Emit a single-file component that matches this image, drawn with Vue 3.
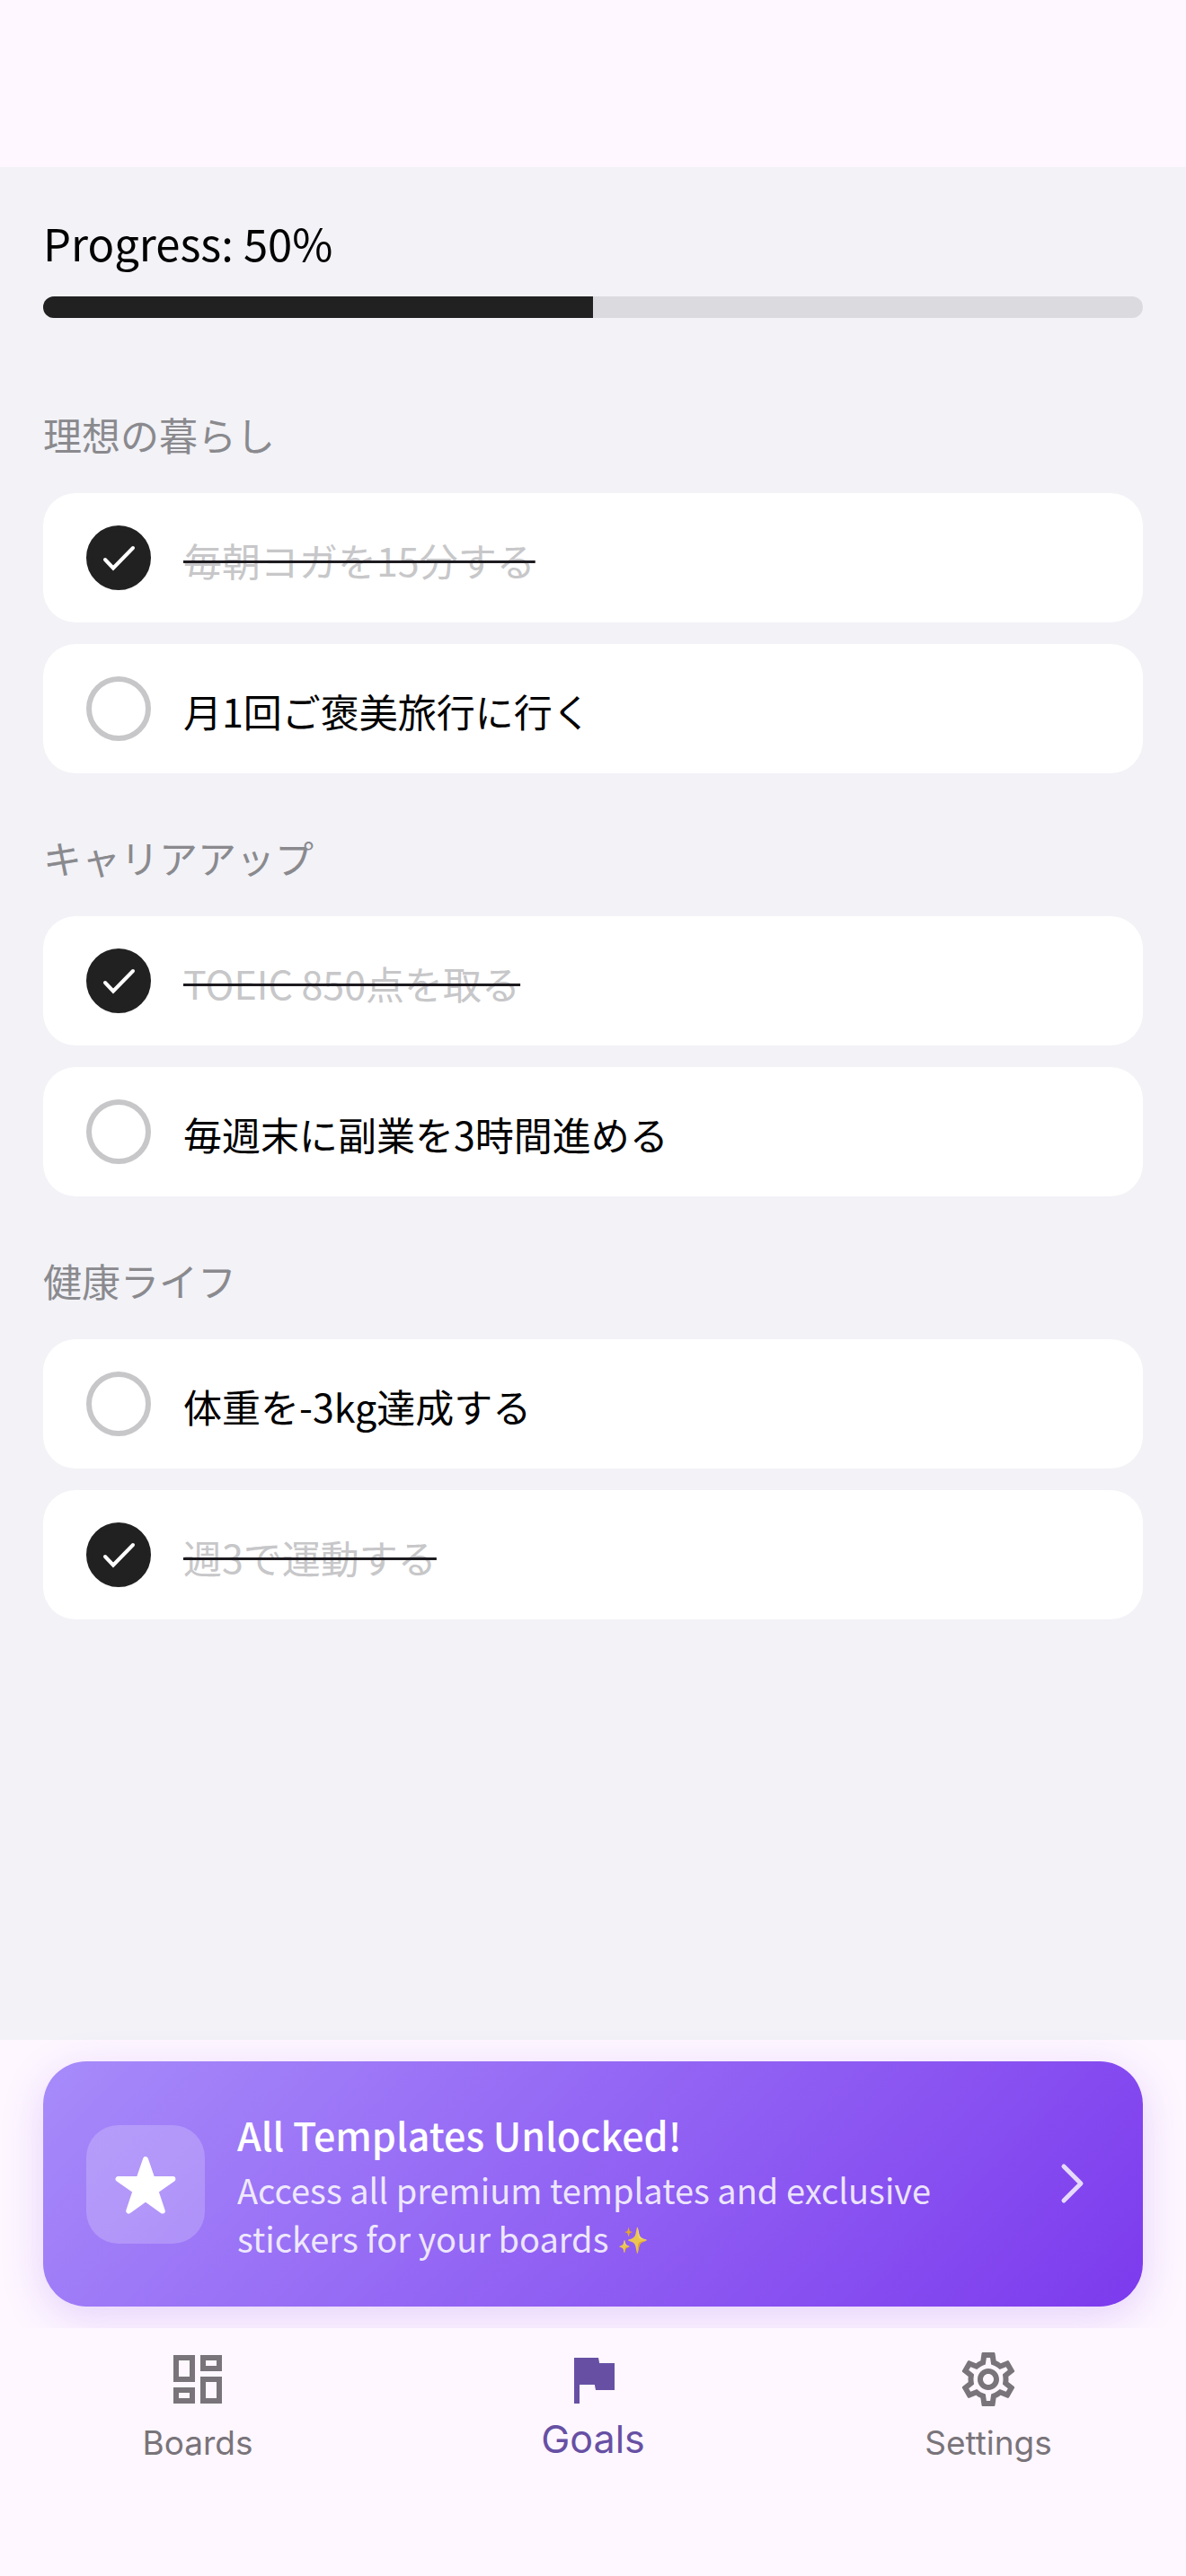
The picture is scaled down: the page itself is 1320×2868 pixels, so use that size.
<template>
  <div class="app-shell">
    <main class="goals-page">
      <!-- 全体の進捗 -->
      <section class="progress-section">
        <div id="progress-label" class="progress-label">Progress: {{ progress }}%</div>
        <div
            class="progress-track"
            role="progressbar"
            aria-labelledby="progress-label"
            :aria-valuenow="progress"
            aria-valuemin="0"
            aria-valuemax="100"
        >
          <div class="progress-fill" :style="{ width: progress + '%' }"></div>
        </div>
      </section>

      <!-- カテゴリごとの目標 -->
      <section v-for="group in groups" :key="group.title" class="goal-group">
        <h2 class="group-title">{{ group.title }}</h2>
        <ul class="goal-list">
          <li v-for="goal in group.goals" :key="goal.id">
            <label class="goal-card" :class="{ done: goal.done }">
              <span class="check">
                <input v-model="goal.done" type="checkbox" class="check-input" />
                <svg v-if="goal.done" class="check-mark" viewBox="0 0 72 72" aria-hidden="true">
                  <path d="M21 38l9 9.500 22-22.500" />
                </svg>
              </span>
              <span class="goal-text">{{ goal.text }}</span>
            </label>
          </li>
        </ul>
      </section>
    </main>

    <!-- プレミアムバナー -->
    <div class="banner-area">
      <button type="button" class="banner">
        <span class="banner-icon">
          <svg viewBox="0 0 72 72" aria-hidden="true">
            <path d="M36 8.200 L43.500 30 H66.400 L47.400 43.400 L54.800 65.600 L36 52 L17.200 65.600 L24.600 43.400 L5.600 30 H28.500 Z" />
          </svg>
        </span>
        <span class="banner-body">
          <span class="banner-title">All Templates Unlocked!</span>
          <span class="banner-text">Access all premium templates and exclusive</span>
          <span class="banner-text">
            <span>stickers for your boards</span>
            <span class="emoji">✨</span>
          </span>
        </span>
        <svg class="banner-arrow" viewBox="0 0 60 60" aria-hidden="true">
          <path d="M20 10l19 19-19 19" />
        </svg>
      </button>
    </div>

    <nav class="tab-bar">
      <a
          v-for="tab in tabs"
          :key="tab.name"
          href="#"
          class="tab-item"
          :class="{ active: activeTab === tab.name }"
          @click.prevent="activeTab = tab.name"
      >
        <svg class="tab-icon" viewBox="0 0 24 24" aria-hidden="true">
          <path :d="tab.icon" />
        </svg>
        <span class="tab-label">{{ tab.name }}</span>
      </a>
    </nav>
  </div>
</template>

<script setup>
import { computed, ref } from 'vue';

const groups = ref([
  {
    title: '理想の暮らし',
    goals: [
      { id: 1, text: '毎朝ヨガを15分する', done: true },
      { id: 2, text: '月1回ご褒美旅行に行く', done: false }
    ]
  },
  {
    title: 'キャリアアップ',
    goals: [
      { id: 3, text: 'TOEIC 850点を取る', done: true },
      { id: 4, text: '毎週末に副業を3時間進める', done: false }
    ]
  },
  {
    title: '健康ライフ',
    goals: [
      { id: 5, text: '体重を-3kg達成する', done: false },
      { id: 6, text: '週3で運動する', done: true }
    ]
  }
]);

const progress = computed(() => {
  const goals = groups.value.flatMap((group) => group.goals);
  return Math.round((goals.filter((goal) => goal.done).length / goals.length) * 100);
});

// タブ
const tabs = [
  {
    name: 'Boards',
    icon: 'M19 5v2h-4V5h4M9 5v6H5V5h4m10 8v6h-4v-6h4M9 17v2H5v-2h4M21 3h-8v6h8V3zM11 3H3v10h8V3zm10 8h-8v10h8V11zm-10 4H3v6h8v-6z'
  },
  {
    name: 'Goals',
    icon: 'M14.4 6L14 4H5v17h2v-7h5.6l.4 2h7V6z'
  },
  {
    name: 'Settings',
    icon: 'M19.43 12.98c.04-.32.07-.64.07-.98 0-.34-.03-.66-.07-.98l2.11-1.65c.19-.15.24-.42.12-.64l-2-3.46c-.09-.16-.26-.25-.44-.25-.06 0-.12.01-.17.03l-2.49 1c-.52-.4-1.08-.73-1.69-.98l-.38-2.65C14.46 2.18 14.25 2 14 2h-4c-.25 0-.46.18-.49.42l-.38 2.65c-.61.25-1.17.59-1.69.98l-2.49-1c-.06-.02-.12-.03-.18-.03-.17 0-.34.09-.43.25l-2 3.46c-.13.22-.07.49.12.64l2.11 1.65c-.04.32-.07.65-.07.98 0 .33.03.66.07.98l-2.11 1.65c-.19.15-.24.42-.12.64l2 3.46c.09.16.26.25.44.25.06 0 .12-.01.17-.03l2.49-1c.52.4 1.08.73 1.69.98l.38 2.65c.03.24.24.42.49.42h4c.25 0 .46-.18.49-.42l.38-2.65c.61-.25 1.17-.59 1.69-.98l2.49 1c.06.02.12.03.18.03.17 0 .34-.09.43-.25l2-3.46c.12-.22.07-.49-.12-.64l-2.11-1.65zm-1.98-1.71c.04.31.05.52.05.73 0 .21-.02.43-.05.73l-.14 1.13.89.7 1.08.84-.7 1.21-1.27-.51-1.04-.42-.9.68c-.43.32-.84.56-1.25.73l-1.06.43-.16 1.13-.2 1.35h-1.4l-.19-1.35-.16-1.13-1.06-.43c-.43-.18-.83-.41-1.23-.71l-.91-.7-1.06.43-1.27.51-.7-1.21 1.08-.84.89-.7-.14-1.13c-.03-.31-.05-.54-.05-.74s.02-.43.05-.73l.14-1.13-.89-.7-1.08-.84.7-1.21 1.27.51 1.04.42.9-.68c.43-.32.84-.56 1.25-.73l1.06-.43.16-1.13.2-1.35h1.39l.19 1.35.16 1.13 1.06.43c.43.18.83.41 1.23.71l.91.7 1.06-.43 1.27-.51.7 1.21-1.07.85-.89.7.14 1.13zM12 8c-2.21 0-4 1.79-4 4s1.79 4 4 4 4-1.79 4-4-1.79-4-4-4zm0 6c-1.1 0-2-.9-2-2s.9-2 2-2 2 .9 2 2-.9 2-2 2z'
  }
];
const activeTab = ref('Goals');
</script>

<style>
body {
  margin: 0;
  background: #fef7ff;
}
</style>

<style scoped>
.app-shell {
  display: flex;
  flex-direction: column;
  min-height: 100vh;
  box-sizing: border-box;
  padding-top: 186px;
  background: #fef7ff;
  color: #000;
  font-family: 'Noto Sans CJK JP', 'Noto Sans', sans-serif;
}

.goals-page {
  flex: 1;
  padding: 48px;
  background: #f2f2f7;
}

.progress-section {
  margin-bottom: 87px;
}

.progress-label {
  margin-bottom: 24px;
  font-size: 49px;
  line-height: 72px;
}

.progress-track {
  height: 24px;
  border-radius: 12px;
  background: #dadadf;
  overflow: hidden;
}

.progress-fill {
  height: 100%;
  background: #212121;
}

.goal-group {
  margin-bottom: 51px;
}

.group-title {
  margin: 0 0 24px;
  font-size: 43px;
  font-weight: 400;
  line-height: 84px;
  color: #8a8a8e;
}

.goal-list {
  display: flex;
  flex-direction: column;
  gap: 24px;
  margin: 0;
  padding: 0;
  list-style: none;
}

.goal-card {
  display: flex;
  align-items: center;
  gap: 36px;
  min-height: 144px;
  box-sizing: border-box;
  padding: 36px 48px;
  border-radius: 36px;
  background: #fff;
  cursor: pointer;
}

.check {
  display: grid;
  flex: none;
  width: 72px;
  height: 72px;
}

.check-input,
.check-mark {
  grid-area: 1 / 1;
  width: 72px;
  height: 72px;
}

.check-input {
  appearance: none;
  margin: 0;
  box-sizing: border-box;
  border: 6px solid #c7c7c9;
  border-radius: 50%;
}

.check-input:checked {
  border-color: #212121;
  background: #212121;
}

.check-mark {
  fill: none;
  stroke: #fff;
  stroke-width: 4;
  stroke-linecap: round;
  pointer-events: none;
}

.goal-text {
  padding-top: 4px;
  font-size: 43px;
  line-height: 64px;
}

.done .goal-text {
  color: #c7c7c9;
  text-decoration: line-through 3px #1d1b20;
}

.banner-area {
  padding: 24px 48px;
}

.banner {
  display: flex;
  align-items: center;
  gap: 36px;
  width: 100%;
  min-height: 273px;
  padding: 48px;
  border: 0;
  border-radius: 48px;
  background: linear-gradient(135deg, #a78bfa, #7c3aed);
  box-shadow: 0 12px 48px rgba(124, 58, 237, 0.2);
  color: #fff;
  font-family: inherit;
  text-align: left;
  cursor: pointer;
}

.banner-icon {
  display: grid;
  flex: none;
  place-items: center;
  width: 132px;
  height: 132px;
  border-radius: 36px;
  background: rgba(255, 255, 255, 0.2);
}

.banner-icon svg {
  width: 72px;
  height: 72px;
  fill: #fff;
  stroke: #fff;
  stroke-width: 6;
  stroke-linejoin: round;
}

.banner-body {
  flex: 1;
}

.banner-title {
  display: block;
  margin-bottom: 4px;
  font-size: 43px;
  font-weight: 500;
  line-height: 62px;
}

.banner-text {
  display: flex;
  align-items: center;
  gap: 10px;
  font-size: 38px;
  line-height: 54px;
  color: rgba(255, 255, 255, 0.85);
}

.emoji {
  font-size: 28px;
}

.banner-arrow {
  flex: none;
  width: 60px;
  height: 60px;
  fill: none;
  stroke: rgba(255, 255, 255, 0.8);
  stroke-width: 5;
  stroke-linecap: round;
  stroke-linejoin: round;
}

.tab-bar {
  position: relative;
  display: flex;
  min-height: 276px;
  background: #fef7ff;
}

.tab-item {
  display: flex;
  flex: 1;
  flex-direction: column;
  align-items: center;
  padding-top: 21px;
  color: #79747a;
  font-family: Inter, sans-serif;
  text-decoration: none;
}

.tab-icon {
  width: 72px;
  height: 72px;
  fill: currentColor;
}

.tab-label {
  margin-top: 8px;
  font-size: 37px;
  line-height: 54px;
}

.tab-item.active {
  color: #6750a4;
}

.active .tab-label {
  font-size: 43px;
  line-height: 44px;
}
</style>
